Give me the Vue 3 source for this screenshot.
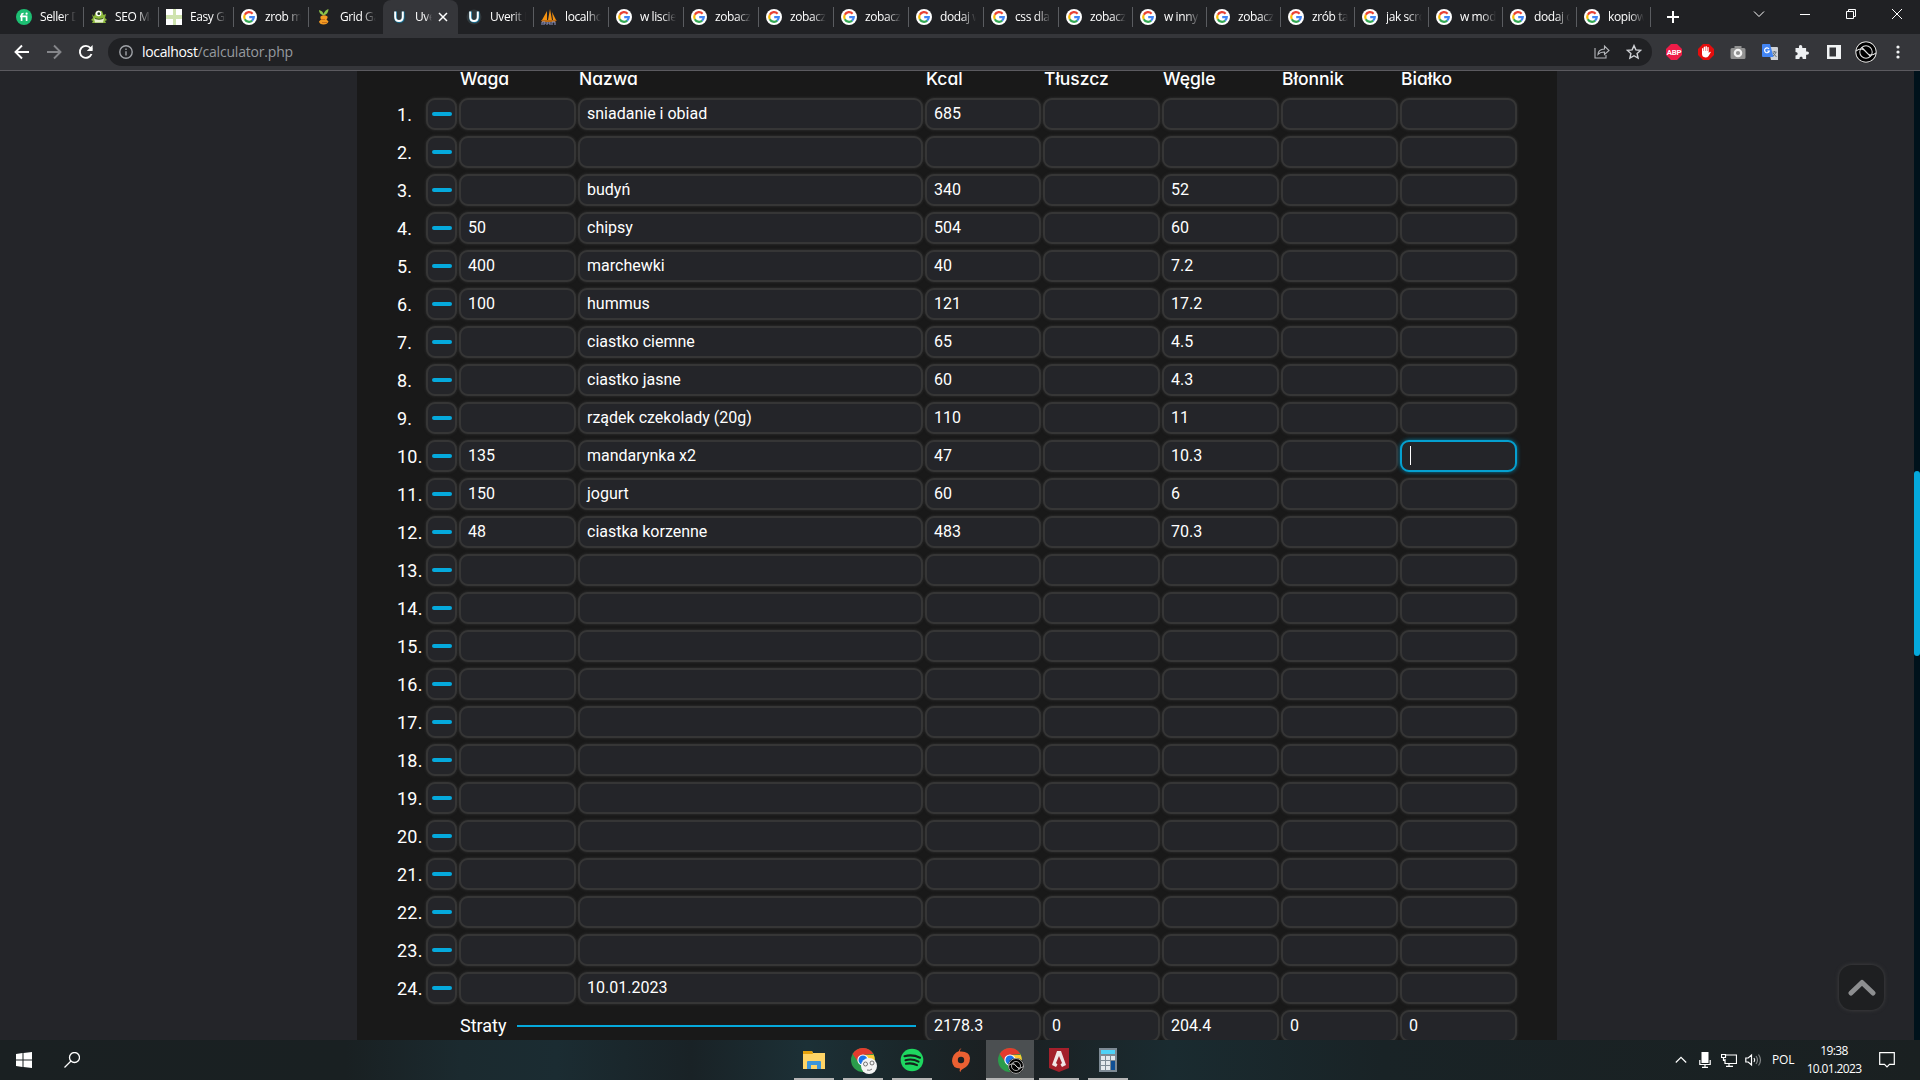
<script setup>
const titles = ['Seller D', 'SEO Ma', 'Easy Gr', 'zrob m', 'Grid Ga', 'Uve', 'Uverit P', 'localho', 'w liscie', 'zobacz', 'zobacz', 'zobacz', 'dodaj w', 'css dla', 'zobacz', 'w inny', 'zobacz', 'zrób ta', 'jak scro', 'w mod', 'dodaj o', 'kopiow']
const icons = ['fi', 'frog', 'easy', 'g', 'carrot', 'u', 'u', 'pma']
const tabs = titles.map((title, i) => ({ title, icon: icons[i] || 'g', active: i === 5, narrow: i > 13 }))
const headers = ['Waga', 'Nazwa', 'Kcal', 'Tłuszcz', 'Węgle', 'Błonnik', 'Białko']
const data = {
  1: ['', 'sniadanie i obiad', '685', '', ''],
  3: ['', 'budyń', '340', '', '52'],
  4: ['50', 'chipsy', '504', '', '60'],
  5: ['400', 'marchewki', '40', '', '7.2'],
  6: ['100', 'hummus', '121', '', '17.2'],
  7: ['', 'ciastko ciemne', '65', '', '4.5'],
  8: ['', 'ciastko jasne', '60', '', '4.3'],
  9: ['', 'rządek czekolady (20g)', '110', '', '11'],
  10: ['135', 'mandarynka x2', '47', '', '10.3'],
  11: ['150', 'jogurt', '60', '', '6'],
  12: ['48', 'ciastka korzenne', '483', '', '70.3'],
  24: ['', '10.01.2023', '', '', '']
}
const rows = Array.from({ length: 24 }, (_, i) => ({
  n: i + 1,
  cells: Array.from({ length: 7 }, (_, c) => (data[i + 1] || [])[c] || '')
}))
const sums = ['2178.3', '0', '204.4', '0', '0']
</script>

<template>
  <div class="screen">
    <svg width="0" height="0" class="defs">
      <symbol id="g" viewBox="0 0 16 16">
        <circle cx="8" cy="8" r="8" fill="#fff" />
        <g fill="none" stroke-width="2.2">
          <path d="M11.6 4.7A4.8 4.8 0 0 0 3.8 5.8" stroke="#ea4335" />
          <path d="M3.8 5.7A4.8 4.8 0 0 0 3.8 10.3" stroke="#fbbc05" />
          <path d="M3.8 10.2A4.8 4.8 0 0 0 11.2 11.6" stroke="#34a853" />
          <path d="M8.2 8.1H12.8A4.8 4.8 0 0 1 11.1 11.7" stroke="#4285f4" />
        </g>
      </symbol>
      <symbol id="fi" viewBox="0 0 16 16">
        <circle cx="8" cy="8" r="8" fill="#1dbf73" />
        <path d="M5.6 12V6.2Q5.6 4.4 7.6 4.5M4 7.3H10.6V12" fill="none" stroke="#fff" stroke-width="1.7" />
        <circle cx="10.6" cy="4.7" r="1.1" fill="#fff" />
      </symbol>
      <symbol id="frog" viewBox="0 0 16 16">
        <path d="M1 5l2 2.500L4.500 3.500 7 1.500l4 .5 1.500 4L15 5l-1 4 2 2-2 1 1 2H1l1-2-2-1 2-2z" fill="#8cb93c" />
        <circle cx="7.500" cy="4.500" r="2.800" fill="#fff" /><circle cx="7.800" cy="4.700" r="1.400" fill="#213b1b" />
        <path d="M3 9.500q5 2 10 0l-1 4H4z" fill="#e6f0cf" /><path d="M4 9.500q4 1.500 8 0" stroke="#425f25" fill="none" />
      </symbol>
      <symbol id="easy" viewBox="0 0 16 16">
        <path d="M0 0h16v16H0z" fill="#fff" /><path d="M7 0h3v16H7zM0 6h16v4H0z" fill="#cfe3ae" />
      </symbol>
      <symbol id="carrot" viewBox="0 0 16 16">
        <path d="M7.500 6.500Q3 5 3 1q4 1 4.500 4Q9 1 12.500 0q0 5-5 6.500" fill="#8bc34a" />
        <path d="M4.500 7.500q3.500-2.500 7 0 .5 1.500-1 3l2 2q-1 3-5 3t-4.500-3l2-2q-1-1.500-.5-3" fill="#f39a22" />
        <path d="M5 10.500h4M6 13.500h5" stroke="#c9701a" />
      </symbol>
      <symbol id="u" viewBox="0 0 16 16">
        <circle cx="8" cy="8" r="7.5" fill="#30383c" />
        <path d="M4.600 2.500v6q0 4 3.800 4t3.800-4v-6" fill="none" stroke="#17739a" stroke-width="2.8" />
        <path d="M4.200 2.500V8q0 4 3.800 4t3.800-4V2.500" fill="none" stroke="#fff" stroke-width="2" />
      </symbol>
      <symbol id="pma" viewBox="0 0 16 16">
        <path d="M1 11L6 2v9zM7 11L9 0l2 11zM12 11l-1-8 4 8z" fill="#f29111" />
        <path d="M0 11h16l-2 2H1z" fill="#bd6b13" /><path d="M1 16v-3h3v2H2m4-2v3m0-2h3m0-1v3m2 0v-3h3v3" fill="none" stroke="#9096c0" />
      </symbol>
      <symbol id="chrome" viewBox="0 0 24 24">
        <circle cx="12" cy="12" r="12" fill="#2b9c4b" />
        <path d="M1.6 6A12 12 0 0 1 22.4 6L12 7 7.7 14.5z" fill="#e33b2e" />
        <path d="M22.4 6.2A12 12 0 0 1 12 24l4.3-9.5A5 5 0 0 0 12 7h10z" fill="#fcc934" />
        <circle cx="12" cy="12" r="5.6" fill="#fff" /><circle cx="12" cy="12" r="4.5" fill="#1a73e8" />
      </symbol>
      <symbol id="ban" viewBox="0 0 24 24">
        <circle cx="12" cy="12" r="12" fill="#000" />
        <g fill="none" stroke="#e4e4e4" stroke-width="1.1"><circle cx="12" cy="12" r="11.200" /><circle cx="12" cy="12" r="6.800" /><path d="M1 11q5-4 9-1l4 4q4 3 9-1M7.500 7l9.500 10" /></g>
      </symbol>
    </svg>

    <header class="tabstrip">
      <div v-for="(t, i) in tabs" :key="i" class="tab" :class="{ active: t.active, narrow: t.narrow, before: i === 4 }">
        <svg class="fav"><use :href="'#' + t.icon" /></svg>
        <span class="title">{{ t.title }}</span>
        <svg v-if="t.active" class="close" viewBox="0 0 10 10"><path d="M1 1l8 8M9 1L1 9" /></svg>
      </div>
      <svg class="plus" viewBox="0 0 12 12"><path d="M6 0v12M0 6h12" /></svg>
      <div class="winbtns">
        <svg viewBox="0 0 12 12"><path d="M1 3.5l5 5 5-5" /></svg>
        <svg viewBox="0 0 12 12"><path d="M1 6.5h10" /></svg>
        <svg viewBox="0 0 12 12"><path d="M1.5 3.5h7v7h-7zM3.5 3.5v-2h7v7h-2" /></svg>
        <svg viewBox="0 0 12 12"><path d="M1 1l10 10M11 1L1 11" /></svg>
      </div>
    </header>

    <div class="toolbar">
      <div class="nav">
        <svg viewBox="0 0 16 16"><path d="M15 8H2M8 1.5L1.5 8 8 14.5" /></svg>
        <svg viewBox="0 0 16 16" class="dim"><path d="M1 8h13M8 1.5L14.5 8 8 14.5" /></svg>
        <svg viewBox="0 0 16 16"><path d="M13.5 10A6 6 0 1 1 12.5 4L14 5.7" /><path d="M14.6 1v6H8.8z" class="solid" /></svg>
      </div>
      <div class="omni">
        <svg class="info" viewBox="0 0 14 14"><circle cx="7" cy="7" r="6.2" /><path d="M7 6.2v4.2M7 3.4v1.5" /></svg>
        <span class="url">localhost<i>/calculator.php</i></span>
        <svg class="share" viewBox="0 0 16 16"><path d="M1 4v10h11v-3M4 10.500q0-5 6.500-5.500V2l4.500 4.500-4.500 4V8Q6 8 4 10.500z" /></svg>
        <svg class="star" viewBox="0 0 16 16"><path d="M8 1.600l1.900 4.300 4.700.5-3.500 3.100 1 4.600L8 11.700l-4.100 2.400 1-4.600L1.400 6.400l4.700-.5z" /></svg>
      </div>
      <div class="exts">
        <svg viewBox="0 0 16 16"><path d="M5 0h6l5 5v6l-5 5H5l-5-5V5z" fill="#ee1c48" /><text x="8" y="10.800" text-anchor="middle" class="abp">ABP</text></svg>
        <svg viewBox="0 0 16 16"><path d="M5 0h6l5 5v6l-5 5H5l-5-5V5z" fill="#e40d0d" /><path d="M4 8V4.500q.7-.8 1.300 0V7h.4V3q.7-.8 1.400 0v4h.4V2.500q.7-.8 1.400 0V7h.5V3.300q.7-.8 1.300 0V9l1.200-1.300q.9-.2.9.5L10.600 12q-1 1.500-3.200 1.500Q4 13 4 10z" fill="#fff" /></svg>
        <svg viewBox="0 0 16 16"><path d="M2 4h2.500V2h7v2H14q1.500 0 1.500 1.500v8Q15.500 15 14 15H2Q.5 15 .5 13.500v-8Q.5 4 2 4z" fill="#929292" /><circle cx="8" cy="9" r="3.200" fill="none" stroke="#f3f3f3" stroke-width="2.200" /></svg>
        <svg viewBox="0 0 16 16"><path d="M6 3h9q1 0 1 1v12H9z" fill="#cfd2d6" /><path d="M1 0h7l3.500 13H1q-1 0-1-1V1q0-1 1-1z" fill="#4285f4" /><path d="M7 5A2.400 2.400 0 1 0 7.300 7H5.300" fill="none" stroke="#fff" stroke-width="1.200" /><path d="M10.500 8h4M12.500 7v1m1.500 0q-1 3-3 4m0-3l3.500 4" fill="none" stroke="#64717c" /></svg>
        <svg viewBox="0 0 16 16"><path d="M1.500 4H5Q4.500 1 6.500 1T8.300 4h3.800v3.600q2.900-.5 2.900 1.500t-2.900 1.600V15H8.700q.2-2.500-1.600-2.500T5.400 15H1.500v-3.600q2.200 0 2.200-1.700T1.500 8z" fill="#eef0f2" /></svg>
        <svg viewBox="0 0 16 16"><path d="M1 1h14v14H1z" fill="#f1f3f4" /><path d="M3.500 3.500H10v9H3.500z" fill="#35363a" /></svg>
        <svg class="avatar"><use href="#ban" /></svg>
        <svg viewBox="0 0 16 16" class="dots"><circle cx="8" cy="3" r="1.600" /><circle cx="8" cy="8" r="1.600" /><circle cx="8" cy="13" r="1.600" /></svg>
      </div>
    </div>

    <main class="page">
      <section class="panel">
        <div class="grid head">
          <span></span><span></span>
          <b v-for="h in headers" :key="h">{{ h }}</b>
        </div>
        <div v-for="r in rows" :key="r.n" class="grid row">
          <span class="num">{{ r.n }}.</span>
          <button class="box minus"><i></i></button>
          <div v-for="(c, i) in r.cells" :key="i" class="box cell" :class="{ focus: r.n === 10 && i === 6 }">{{ c }}<i v-if="r.n === 10 && i === 6" class="caret"></i></div>
        </div>
        <div class="grid row">
          <span></span><span></span>
          <div class="loss"><span>Straty</span><hr></div>
          <div v-for="(s, i) in sums" :key="i" class="box cell sum">{{ s }}</div>
        </div>
      </section>
      <div class="scrollbar"><i></i></div>
      <button class="totop"><svg viewBox="0 0 28 18"><path d="M3 14L14 3.500 25 14" /></svg></button>
    </main>

    <footer class="taskbar">
      <svg class="win" viewBox="0 0 16 16"><path d="M0 2L6.500 1V7.500H0zM7.500 .9L16 0V7.500H7.500zM0 8.500H6.500V15L0 14zM7.500 8.500H16V16L7.500 15.100z" /></svg>
      <svg class="search" viewBox="0 0 16 16"><circle cx="10.500" cy="5.500" r="5" /><path d="M7 9L.5 15.500" /></svg>
      <div class="apps">
        <div class="app"><svg viewBox="0 0 24 24"><path d="M1 3h9l1 2h12v16H1z" fill="#ffd466" /><path d="M1 3h9l1 3H1z" fill="#e6a20c" /><path d="M5 21v-7q0-1 1-1h12q1 0 1 1v7h-4v-4H9v4z" fill="#3c95db" /></svg></div>
        <div class="app"><svg><use href="#chrome" /></svg><svg class="badge" viewBox="0 0 16 16"><circle cx="8" cy="8" r="8" fill="#f4f4f4" /><g fill="none" stroke="#555" stroke-width=".8"><circle cx="4.500" cy="6" r="2" /><circle cx="11" cy="5" r="2" /><path d="M6 12q3 1 5-1" /></g></svg></div>
        <div class="app"><svg viewBox="0 0 24 24"><circle cx="12" cy="12" r="11.300" fill="#1ed760" /><path d="M4.500 8.200q8-2.200 15.500 1.500M5.500 12.200q7-1.800 13 1.500M6 15.800q6-1.300 11 1.300" fill="none" stroke="#14231c" stroke-width="2.100" stroke-linecap="round" /></svg></div>
        <div class="app off"><svg viewBox="0 0 24 24"><path d="M12.500 0Q10.500 2 11 3.500 20.500 3 21 10 21 18 13 21.500 11.500 22 11.500 24 10 23 11 20.500 3.500 20.500 3 13 3.500 5.500 10 3 10 1 12.500 0z" fill="#ea6032" /><circle cx="12" cy="12" r="3.200" fill="#1c2123" /></svg></div>
        <div class="app current"><svg><use href="#chrome" /></svg><svg class="badge"><use href="#ban" /></svg></div>
        <div class="app"><svg viewBox="0 0 24 24"><path d="M2 0h20v20l-10 4L2 20z" fill="#a3202b" /><path d="M10 3h4l5 14-4 2-1.500-2.500L15 15 12 8l-3 7 1.500 1.500L9 19l-4-2z" fill="#f0e6e6" /></svg></div>
        <div class="app calc"><svg viewBox="0 0 24 24"><path d="M3 0h18v24H3z" fill="#7d8a94" /><path d="M5 2h14v4H5z" fill="#4fd2f7" /><path d="M5 8h4v4H5zM10 8h4v4h-4zM15 8h4v4h-4zM5 13h4v4H5zM10 13h4v4h-4zM5 18h4v4H5zM10 18h4v4h-4z" fill="#e4e9ed" /><path d="M15 13h4v9h-4z" fill="#0f4f94" /></svg></div>
      </div>
      <div class="tray">
        <svg class="t1" viewBox="0 0 12 12"><path d="M.8 8.500L6 3.300l5.200 5.200" /></svg>
        <svg class="t2" viewBox="0 0 12 16"><path d="M2.500 0h7v11h-7z" class="solid" /><path d="M.8 8v4.500h10.400V8M6 12.500v3M3 15.300h6" /></svg>
        <svg class="t3" viewBox="0 0 16 14"><path d="M5 2h10.500v8.500H4V6M8 10.500v3M5 13.300h7M.5 1.500h4v3h-4zM2.500 5v2.500H4" /></svg>
        <svg class="t4" viewBox="0 0 17 14"><path d="M.8 5h2.400l3.300-3v10L3.200 9H.8zM9 5q1.500 2 0 4" /><path d="M11 3q3 4 0 8M13.500 1.500q4 5.500 0 11" opacity=".45" /></svg>
        <span class="lang">POL</span>
        <div class="clock"><span>19:38</span><span>10.01.2023</span></div>
        <svg class="t5" viewBox="0 0 16 16"><path d="M.7.7h14.600v11.600H10.500L8 14.800 5.500 12.300H.7z" /></svg>
      </div>
    </footer>
  </div>
</template>

<style>
html, body { margin: 0; overflow: hidden; background: #242529; }
</style>

<style scoped>
* { box-sizing: border-box; }
.screen { width: 1920px; height: 1080px; display: flex; flex-direction: column; overflow: hidden; font-family: "Open Sans", "Noto Sans", sans-serif; color: #fff; }
.defs { position: absolute; }
svg { flex: none; display: block; fill: none; stroke: none; }
.tabstrip { height: 34px; flex: none; background: #202124; display: flex; padding-left: 8px; align-items: stretch; }
.tab { width: 75px; display: flex; align-items: center; padding-left: 8px; position: relative; flex: none; }
.tab.narrow { width: 74px; }
.tab::after { content: ""; position: absolute; right: -1px; top: 7px; width: 1px; height: 20px; background: #5a5c60; }
.tab.before::after, .tab.active::after { display: none; }
.tab.active { background: #35363a; border-radius: 8px 8px 0 0; }
.fav { width: 16px; height: 16px; margin-right: 8px; }
.title { width: 36px; overflow: hidden; white-space: nowrap; font-size: 12px; line-height: 18px; letter-spacing: -.4px; -webkit-mask-image: linear-gradient(90deg, #000 60%, transparent); mask-image: linear-gradient(90deg, #000 60%, transparent); }
.active .title { width: 17px; }
.close { width: 10px; height: 10px; margin-left: 6px; stroke: #fff; stroke-width: 1.5; }
.plus { width: 12px; height: 12px; margin: 11px 0 0 17px; stroke: #fff; stroke-width: 2; }
.winbtns { margin: 8px 17px 0 auto; display: flex; gap: 34px; }
.winbtns svg { width: 12px; height: 12px; stroke: #fff; stroke-width: 1; }
.toolbar { height: 37px; flex: none; background: #35363a; border-bottom: 1px solid #5b5a5f; display: flex; align-items: center; }
.nav { display: flex; gap: 16px; padding-left: 14px; width: 108px; }
.nav svg { width: 16px; height: 16px; stroke: #fff; stroke-width: 1.9; }
.nav .dim { stroke: #85868a; }
.nav .solid { fill: #fff; stroke: none; }
.omni { width: 1544px; height: 28px; border-radius: 14px; background: #202124; display: flex; align-items: center; padding: 0 10px 0 11px; }
.info { width: 14px; height: 14px; stroke: #a0a3a8; stroke-width: 1.4; }
.url { font-size: 14px; line-height: 20px; margin-left: 9px; letter-spacing: -.34px; }
.url i { font-style: normal; color: #969a9f; letter-spacing: -.2px; }
.share { width: 16px; height: 16px; margin-left: auto; stroke: #b5b7bb; stroke-width: 1.1; }
.star { width: 16px; height: 16px; margin-left: 16px; stroke: #d0d2d6; stroke-width: 1.4; }
.exts { display: flex; align-items: center; gap: 16px; padding-left: 14px; }
.exts svg { width: 16px; height: 16px; }
.exts .avatar { width: 22px; height: 22px; margin: 0 -3px; }
.dots { fill: #f1f3f4; }
.abp { font: bold 7.8px Roboto, sans-serif; fill: #fff; letter-spacing: -.2px; }

.page { height: 969px; flex: none; background: #242529; display: flex; position: relative; overflow: hidden; }
.panel { margin-left: 357px; width: 1200px; height: 969px; background: #191919; padding-left: 39px; font-family: Roboto, sans-serif; }
.grid { display: grid; grid-template-columns: 28px 31px 117px 345px 116px 117px 117px 117px 117px; column-gap: 2px; }
.head { height: 27px; }
.head b { font: 500 17.500px/16px Inter, sans-serif; font-feature-settings: "cv11"; padding-left: 1px; white-space: nowrap; }
.row { height: 32px; margin-bottom: 6px; }
.num { font-size: 18px; line-height: 34px; padding-left: 1px; white-space: nowrap; letter-spacing: .2px; }
.box { height: 32px; border: 2px solid #363636; border-radius: 9px; background: #242529; box-shadow: 0 0 3px #333; }
.cell { padding-left: 7px; font-size: 16px; line-height: 27px; white-space: nowrap; position: relative; }
.minus { padding: 0 0 0 4px; display: flex; align-items: center; }
.minus i { width: 20px; height: 4px; border-radius: 2px; background: #05a9dc; }
.focus { border: 2px solid #05a0d0; box-shadow: 0 0 4px #057fa5; padding: 4px 0 0 8px; }
.caret { display: block; width: 1px; height: 19px; background: #fff; }
.loss { grid-column: 3 / 5; display: flex; align-items: center; padding: 0 7px 0 1px; font-size: 18px; line-height: 32px; }
.loss hr { flex: 1; height: 2px; border: 0; background: #05a9dc; margin: 0 0 0 10px; }
.scrollbar { margin-left: auto; width: 6px; background: #00121b; padding-top: 400px; }
.scrollbar i { display: block; height: 185px; background: #05a9dc; border-radius: 3px; }
.totop { position: absolute; right: 36px; bottom: 30px; width: 45px; height: 45px; padding: 0; border: 0; border-radius: 13px; background: #1e1f21; box-shadow: 0 0 4px #444; display: flex; align-items: center; justify-content: center; }
.totop svg { width: 28px; height: 18px; stroke: #8d8e90; stroke-width: 5; stroke-linecap: round; stroke-linejoin: round; }

.taskbar { height: 40px; flex: none; display: flex; align-items: center; position: relative; background: linear-gradient(90deg, #1a2022 0, #192022 18%, #1b2a2f 24%, #1b2c32 29%, #192226 36%, #1c3036 42%, #1a2528 48%, #1b1f21 52%, #1a2b30 61%, #192326 72%, #1a2021 100%); }
.win { width: 16px; height: 16px; margin-left: 16px; fill: #fff; }
.search { width: 16px; height: 16px; margin-left: 32px; stroke: #fff; stroke-width: 1.300; }
.apps { display: flex; margin-left: 710px; gap: 1px; }
.app { width: 48px; height: 40px; padding: 8px 12px; position: relative; }
.app svg { width: 24px; height: 24px; }
.app::after { content: ""; position: absolute; left: 4px; right: 4px; bottom: 0; height: 2px; background: #b5b5b5; }
.off::after { display: none; }
.current { background: #4b4f51; }
.current::after { left: 0; right: 0; }
.app .badge { position: absolute; left: 22px; top: 18px; width: 16px; height: 16px; }
.tray { margin-left: auto; display: flex; align-items: center; height: 40px; }
.tray svg { stroke: #fff; stroke-width: 1.2; }
.tray .solid { fill: #fff; stroke: none; }
.t1 { width: 12px; height: 12px; margin-right: 12px; }
.t2 { width: 12px; height: 16px; margin-right: 10px; }
.t3 { width: 16px; height: 14px; margin-right: 8px; }
.t4 { width: 17px; height: 14px; margin-right: 10px; }
.tray span { font-size: 12px; line-height: 18px; letter-spacing: -.65px; white-space: nowrap; }
.tray .lang { width: 35px; letter-spacing: -.2px; }
.clock { display: flex; flex-direction: column; align-items: center; width: 54px; }
.t5 { width: 16px; height: 16px; margin: 0 25px 0 18px; }
</style>
